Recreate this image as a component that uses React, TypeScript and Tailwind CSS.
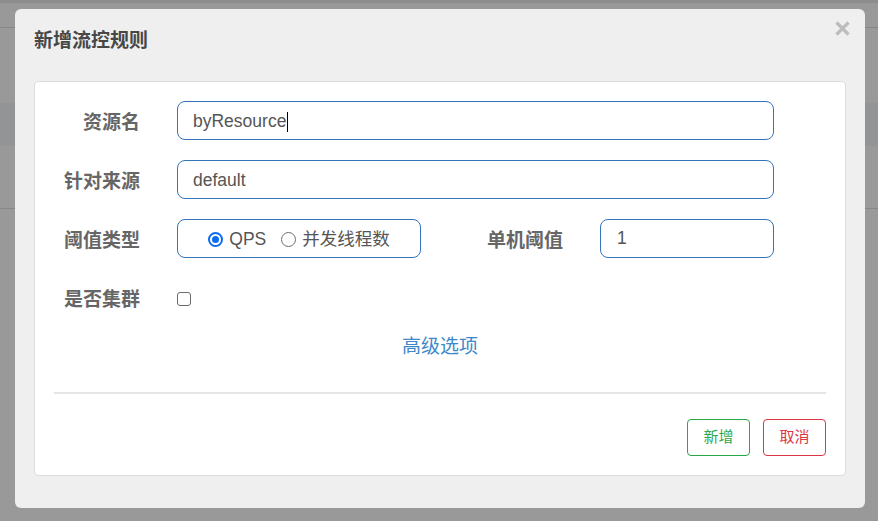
import React from "react";

const Label = ({ children, className = "" }: { children: React.ReactNode; className?: string }) => (
  <div className={`w-[86px] shrink-0 text-right text-[19px] font-bold text-[#666] pt-[5px] ${className}`}>{children}</div>
);

export default function App() {
  return (
    <div className="relative w-[878px] h-[521px] overflow-hidden bg-[#999999] font-['Liberation_Sans','Noto_Sans_CJK_SC',sans-serif]">
      {/* dimmed page behind */}
      <div className="flex flex-col">
        <div className="h-[3px] bg-[#8c8c8c]" />
        <div className="h-[24px]" />
        <div className="h-[1px] bg-[#878787]" />
        <div className="h-[75px]" />
        <div className="h-[43px] bg-[#939496]" />
        <div className="h-[62px]" />
        <div className="h-[1px] bg-[#878787]" />
      </div>

      {/* modal */}
      <div className="absolute left-[15px] top-[9px] w-[850px] h-[499px] rounded-[6px] bg-[#efefef] flex flex-col">
        <div className="h-[64px] px-[19px] flex items-center">
          <h4 className="text-[19px] font-bold text-[#474747]">新增流控规则</h4>
        </div>
        <button className="absolute right-[15px] top-[12px] w-[15px] h-[15px]">
          <svg width="15" height="15" viewBox="0 0 15 15">
            <path d="M1.5 1.5 L13.5 13.5 M13.5 1.5 L1.5 13.5" stroke="#bdbdbd" strokeWidth="3.2" strokeLinecap="butt" />
          </svg>
        </button>

        <div className="mt-[8px] mx-[19px] border border-[#dcdcdc] rounded-[4px] bg-white pt-[19px] px-[19px] pb-[19px]">
          <div className="flex flex-col gap-[20px]">
            <div className="flex items-center h-[39px]">
              <Label>资源名</Label>
              <div className="ml-[37px] w-[597px] h-[39px] border border-[#3374bd] rounded-[8px] flex items-center pl-[15px] pt-[2px] text-[17.5px] text-[#555]">
                byResource<span className="inline-block w-px h-[20px] bg-black ml-px" />
              </div>
            </div>
            <div className="flex items-center h-[39px]">
              <Label>针对来源</Label>
              <div className="ml-[37px] w-[597px] h-[39px] border border-[#3374bd] rounded-[8px] flex items-center pl-[15px] pt-[2px] text-[17.5px] text-[#555]">
                default
              </div>
            </div>
            <div className="flex items-center h-[39px]">
              <Label>阈值类型</Label>
              <div className="ml-[37px] w-[244px] h-[39px] border border-[#3374bd] rounded-[8px] flex items-center justify-center pt-[2px] text-[17.5px] text-[#555]">
                <span className="w-[15px] h-[15px] rounded-full border-[2px] border-[#0b6cf0] bg-white flex items-center justify-center">
                  <span className="w-[7px] h-[7px] rounded-full bg-[#0b6cf0]" />
                </span>
                <span className="ml-[6px]">QPS</span>
                <span className="ml-[15px] w-[15px] h-[15px] rounded-full border border-[#6e6e6e] bg-white" />
                <span className="ml-[6px]">并发线程数</span>
              </div>
              <Label className="ml-[56px]">单机阈值</Label>
              <div className="ml-[37px] w-[174px] h-[39px] border border-[#3374bd] rounded-[8px] flex items-center pl-[16px] text-[17.5px] text-[#555]">
                1
              </div>
            </div>
            <div className="flex items-center h-[39px]">
              <Label>是否集群</Label>
              <span className="ml-[37px] mt-[2px] w-[14px] h-[14px] rounded-[3px] border border-[#6b6b6b] bg-white" />
            </div>
          </div>

          <div className="mt-[16px] text-center leading-[28px] text-[19px] text-[#3d88c9]">高级选项</div>

          <div className="mt-[31px] h-[2px] bg-[#e5e5e5]" />

          <div className="mt-[25px] flex justify-end gap-[13px]">
            <button className="w-[63px] h-[37px] rounded-[4px] border border-[#28a745] text-[15px] text-[#2ea84a] bg-white">新增</button>
            <button className="w-[63px] h-[37px] rounded-[4px] border border-[#dc3545] text-[15px] text-[#dc3545] bg-white">取消</button>
          </div>
        </div>
      </div>
    </div>
  );
}
